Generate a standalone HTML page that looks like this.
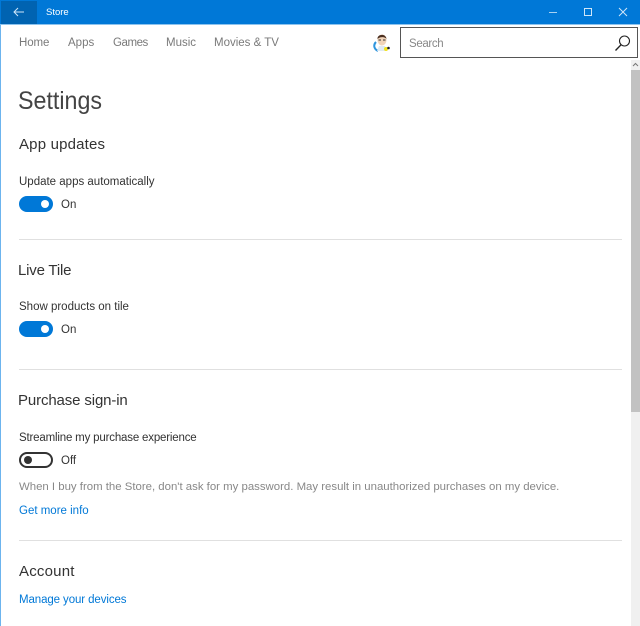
<!DOCTYPE html>
<html><head><meta charset="utf-8">
<style>
html,body{margin:0;padding:0;background:#fff}
body{width:640px;height:626px;position:relative;overflow:hidden;font-family:"Liberation Sans",sans-serif}
.t{position:absolute;white-space:nowrap;line-height:16px;color:#333}
.a{position:absolute}
.nav{color:#7a7a7a;font-size:11.5px;top:35px}
.h{font-size:15px;color:#333;line-height:20px}
.l{font-size:11.5px;color:#333}
.link{font-size:11.5px;color:#0078d7}
.hr{position:absolute;left:19px;width:603px;height:1px;background:#e0e0e0}
.on{position:absolute;left:19px;width:34px;height:16px;border-radius:8px;background:#0078d7}
.on i{position:absolute;left:22px;top:4px;width:8px;height:8px;border-radius:50%;background:#fff}
</style></head><body>
<div class="a" style="left:0;top:0;width:640px;height:24px;background:#0078d7"></div>
<div class="a" style="left:0;top:24px;width:640px;height:1px;background:#8cc3ee"></div>
<div class="a" style="left:1px;top:1px;width:36px;height:23px;background:#0063b1"></div>
<div class="a" style="left:0;top:25px;width:1px;height:601px;background:#6cb4ee"></div>
<svg class="a" style="left:13px;top:6px" width="12" height="12" viewBox="0 0 12 12" fill="none" stroke="#cfe6f8" stroke-width="1"><path d="M1 6H11M5 2L1 6L5 10"/></svg>
<div class="t" style="left:46px;top:5px;font-size:9.5px;color:#fff">Store</div>
<svg class="a" style="left:548px;top:6px" width="12" height="12" fill="none" stroke="#a9d2f2"><path d="M1 6.5H9"/></svg>
<svg class="a" style="left:583px;top:7px" width="11" height="11" fill="none" stroke="#cfe6f8"><path d="M1.5 1.5H8.5V8.5H1.5Z"/></svg>
<svg class="a" style="left:618px;top:7px" width="11" height="11" fill="none" stroke="#cfe6f8"><path d="M1 1L9 9M9 1L1 9"/></svg>

<div class="t nav" style="left:19px;letter-spacing:-.1px">Home</div>
<div class="t nav" style="left:68px">Apps</div>
<div class="t nav" style="left:113px;letter-spacing:-.45px">Games</div>
<div class="t nav" style="left:166px">Music</div>
<div class="t nav" style="left:214px">Movies &amp; TV</div>

<svg class="a" style="left:373px;top:33px" width="18" height="19" viewBox="0 0 18 19">
<path d="M3 9C0 12 1 16 5 18" fill="none" stroke="#2f95dd" stroke-width="2"/>
<ellipse cx="9" cy="7" rx="4.5" ry="5.5" fill="#f1d3b8"/>
<path d="M4.5 6C4 1 13 0 13.5 6C12 3.5 7 3.5 4.5 6Z" fill="#4a2f20"/>
<path d="M5.5 7H8M10 7H12.5" stroke="#333"/>
<path d="M4 18L6 13H12L14 18Z" fill="#dfeaf2"/>
<circle cx="13" cy="16" r="2" fill="#f3e21c"/><circle cx="15.5" cy="15" r="1.3" fill="#222"/>
</svg>

<div class="a" style="left:400px;top:27px;width:236px;height:29px;border:1px solid #555;background:#fff;box-sizing:content-box"></div>
<div class="t" style="left:409px;top:36px;font-size:11.5px;letter-spacing:-.35px;color:#888">Search</div>
<svg class="a" style="left:614px;top:34px" width="18" height="18" fill="none" stroke="#222" stroke-width="1.1"><circle cx="10.5" cy="7" r="5"/><path d="M7 10.8L1.5 16.5" stroke-width="1.4"/></svg>

<div class="a" style="left:631px;top:60px;width:9px;height:566px;background:#f0f0f0"></div>
<div class="a" style="left:631px;top:70px;width:9px;height:342px;background:#c2c2c2"></div>
<svg class="a" style="left:632px;top:62px" width="7" height="6" fill="none" stroke="#777"><path d="M1 4L3.5 1.5L6 4"/></svg>

<div class="t" style="left:18px;top:85px;font-size:25px;line-height:32px;color:#444;transform:scaleX(.93);transform-origin:0 0">Settings</div>

<div class="t h" style="left:19px;top:135px;letter-spacing:.18px">App updates</div>
<div class="t l" style="left:19px;top:174px">Update apps automatically</div>
<div class="on" style="top:196px"><i></i></div>
<div class="t l" style="left:61px;top:197px">On</div>
<div class="hr" style="top:239px"></div>

<div class="t h" style="left:18px;top:261px;letter-spacing:-.2px">Live Tile</div>
<div class="t l" style="left:19px;top:299px">Show products on tile</div>
<div class="on" style="top:321px"><i></i></div>
<div class="t l" style="left:61px;top:322px">On</div>
<div class="hr" style="top:369px"></div>

<div class="t h" style="left:18px;top:391px;letter-spacing:-.13px">Purchase sign-in</div>
<div class="t l" style="left:19px;top:430px;letter-spacing:-.18px">Streamline my purchase experience</div>
<div class="a" style="left:19px;top:452px;width:34px;height:16px;box-sizing:border-box;border:2px solid #333;border-radius:8px"></div>
<div class="a" style="left:24px;top:456px;width:8px;height:8px;border-radius:50%;background:#333"></div>
<div class="t l" style="left:61px;top:453px">Off</div>
<div class="t" style="left:19px;top:479px;font-size:11.4px;color:#888">When I buy from the Store, don't ask for my password. May result in unauthorized purchases on my device.</div>
<div class="t link" style="left:19px;top:503px">Get more info</div>
<div class="hr" style="top:540px"></div>

<div class="t h" style="left:19px;top:562px;letter-spacing:.2px">Account</div>
<div class="t link" style="left:19px;top:592px;letter-spacing:-.1px">Manage your devices</div>
</body></html>
